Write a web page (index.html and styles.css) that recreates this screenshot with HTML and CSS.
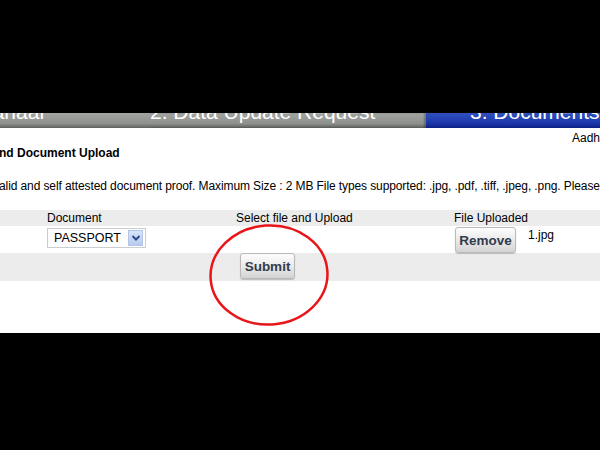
FILE: index.html
```html
<!DOCTYPE html>
<html lang="en">
<head>
    <meta charset="UTF-8">
    <title>Document Upload</title>
    <link rel="stylesheet" href="styles.css">
</head>
<body>
    <div class="screen">
        <!-- Step tabs -->
        <div class="tabs">
            <div class="tab tab-first"><span>hanaar</span></div>
            <div class="tab tab-second"><span>2. Data Update Request</span></div>
            <div class="tab tab-active"><span>3. Documents</span></div>
        </div>

        <div class="user-line">Aadh</div>

        <h3 class="title">nd Document Upload</h3>

        <p class="note">alid and self attested document proof. Maximum Size : 2 MB File types supported: .jpg, .pdf, .tiff, .jpeg, .png. Please</p>

        <!-- Upload table -->
        <div class="upload-table">
            <div class="row row-head">
                <div></div>
                <div>Document</div>
                <div>Select file and Upload</div>
                <div>File Uploaded</div>
            </div>
            <div class="row row-file">
                <div></div>
                <div>
                    <div class="select">
                        <span>PASSPORT</span>
                        <span class="select-arrow">
                            <svg width="10" height="8" viewBox="0 0 10 8"><path d="M1.5 2 L5 5.5 L8.5 2" fill="none" stroke="#2c4a8c" stroke-width="2"/></svg>
                        </span>
                    </div>
                </div>
                <div></div>
                <div class="uploaded">
                    <button class="btn btn-remove">Remove</button>
                    <span class="file-name">1.jpg</span>
                </div>
            </div>
            <div class="row row-submit">
                <div></div>
                <div></div>
                <div><button class="btn btn-submit">Submit</button></div>
                <div></div>
            </div>
        </div>

        <!-- hand drawn marker -->
        <svg class="circle-mark" width="124" height="106" viewBox="0 0 124 106">
            <ellipse cx="62" cy="53" rx="58.5" ry="49.5" fill="none" stroke="#e8161a" stroke-width="2.5" transform="rotate(-4 62 53)"/>
        </svg>
    </div>
</body>
</html>
```

FILE: styles.css
```css
/* General */
body {
    margin: 0;
    background: #000;
    font-family: 'Liberation Sans', Arial, sans-serif;
    color: #000;
}

.screen {
    position: relative;
    margin-top: 113px;
    height: 220px;
    background: #fff;
    overflow: hidden;
}

/* Tabs */
.tabs {
    display: flex;
    height: 15px;
    overflow: hidden;
}

.tab {
    height: 15px;
    display: flex;
    align-items: flex-end;
    overflow: hidden;
    white-space: nowrap;
    color: #fff;
    background: linear-gradient(#a4a6a4, #8e908e 70%, #5e615e);
}

.tab span {
    font-size: 21px;
    line-height: 21px;
    margin-bottom: 6px;
}

.tab-first {
    width: 150px;
}

.tab-first span {
    margin-left: -19px;
}

.tab-second {
    width: 276px;
    box-shadow: inset -2px 0 2px rgba(0, 0, 0, 0.25);
}

.tab-active {
    flex: 1;
    padding-left: 44px;
    background: linear-gradient(#3050c0, #1a36a8 70%, #0c1f84);
}

/* Heading and notes */
.user-line {
    font-size: 12px;
    line-height: 14px;
    margin-top: 3px;
    padding-left: 572px;
    white-space: nowrap;
}

.title {
    font-size: 12px;
    line-height: 14px;
    font-weight: 700;
    margin: 1px 0 0 -1px;
}

.note {
    font-size: 12px;
    line-height: 14px;
    margin: 19px 0 0 -1px;
    white-space: nowrap;
    letter-spacing: -0.1px;
}

/* Table */
.upload-table {
    margin-top: 17px;
    font-size: 12px;
}

.row {
    display: grid;
    grid-template-columns: 47px 189px 218px 1fr;
}

.row-head {
    background: #ececec;
    height: 16px;
    line-height: 16px;
}

.row-file {
    height: 27px;
}

.row-submit {
    background: #ececec;
    height: 28px;
}

.select {
    display: flex;
    align-items: center;
    justify-content: space-between;
    width: 99px;
    height: 20px;
    margin-top: 2px;
    padding-left: 6px;
    border: 1px solid #c9cdd4;
    background: #fff;
    box-sizing: border-box;
    font-size: 12.5px;
}

.select-arrow {
    display: flex;
    align-items: center;
    justify-content: center;
    width: 15px;
    height: 16px;
    margin-right: 2px;
    background: linear-gradient(#d8e4f8, #b8cbef);
    border: 1px solid #b3c4e6;
    box-sizing: border-box;
}

.uploaded {
    display: flex;
    align-items: flex-start;
}

.btn {
    font-family: 'Liberation Sans', Arial, sans-serif;
    font-weight: 700;
    font-size: 13.5px;
    color: #333b4c;
    background: linear-gradient(#fdfdfd, #e6e6e6 60%, #d4d4d4);
    border: 1px solid #b9b9b9;
    border-radius: 3px;
    box-shadow: 0 1px 1px rgba(0, 0, 0, 0.2);
    padding: 0;
    height: 26px;
}

.btn-remove {
    width: 61px;
    margin: 1px 0 0 1px;
}

.btn-submit {
    width: 55px;
    margin: 0 0 0 4px;
}

.file-name {
    margin: 2px 0 0 12px;
}

/* marker overlay */
.circle-mark {
    position: absolute;
    left: 207px;
    top: 109px;
}
```
